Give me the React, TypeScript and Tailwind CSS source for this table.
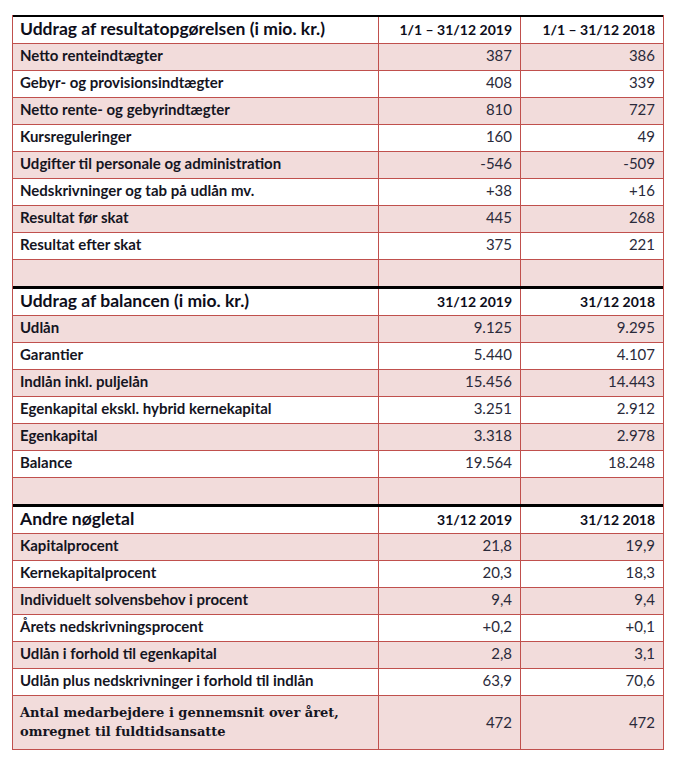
import React from 'react';

type Row = { label: string; a: string; b: string };

const sections: { title: string; colA: string; colB: string; rows: Row[]; spacer: boolean }[] = [
  {
    title: 'Uddrag af resultatopgørelsen (i mio. kr.)',
    colA: '1/1 – 31/12 2019',
    colB: '1/1 – 31/12 2018',
    spacer: true,
    rows: [
      { label: 'Netto renteindtægter', a: '387', b: '386' },
      { label: 'Gebyr- og provisionsindtægter', a: '408', b: '339' },
      { label: 'Netto rente- og gebyrindtægter', a: '810', b: '727' },
      { label: 'Kursreguleringer', a: '160', b: '49' },
      { label: 'Udgifter til personale og administration', a: '-546', b: '-509' },
      { label: 'Nedskrivninger og tab på udlån mv.', a: '+38', b: '+16' },
      { label: 'Resultat før skat', a: '445', b: '268' },
      { label: 'Resultat efter skat', a: '375', b: '221' },
    ],
  },
  {
    title: 'Uddrag af balancen (i mio. kr.)',
    colA: '31/12 2019',
    colB: '31/12 2018',
    spacer: true,
    rows: [
      { label: 'Udlån', a: '9.125', b: '9.295' },
      { label: 'Garantier', a: '5.440', b: '4.107' },
      { label: 'Indlån inkl. puljelån', a: '15.456', b: '14.443' },
      { label: 'Egenkapital ekskl. hybrid kernekapital', a: '3.251', b: '2.912' },
      { label: 'Egenkapital', a: '3.318', b: '2.978' },
      { label: 'Balance', a: '19.564', b: '18.248' },
    ],
  },
  {
    title: 'Andre nøgletal',
    colA: '31/12 2019',
    colB: '31/12 2018',
    spacer: false,
    rows: [
      { label: 'Kapitalprocent', a: '21,8', b: '19,9' },
      { label: 'Kernekapitalprocent', a: '20,3', b: '18,3' },
      { label: 'Individuelt solvensbehov i procent', a: '9,4', b: '9,4' },
      { label: 'Årets nedskrivningsprocent', a: '+0,2', b: '+0,1' },
      { label: 'Udlån i forhold til egenkapital', a: '2,8', b: '3,1' },
      { label: 'Udlån plus nedskrivninger i forhold til indlån', a: '63,9', b: '70,6' },
    ],
  },
];

const font = { fontFamily: 'Lato, "Open Sans", sans-serif' };

const App: React.FC = () => {
  return (
    <div className="w-[676px] h-[765px] bg-white pt-[15px] pl-[12px]" style={font}>
      <div className="w-[652px] border-l border-r border-[#c0504d]">
        {sections.map((s, si) => (
          <div key={si} className={`${si === 0 ? 'border-t-2' : 'border-t-[3px]'} border-black`}>
            <div className="flex h-[27px] border-b border-[#c0504d] bg-white">
              <div className="w-[365px] pl-[7px] pb-[2px] flex items-center text-[17.5px] font-bold text-[#0d0d1a]">{s.title}</div>
              <div className="w-[142px] border-l border-[#c0504d] pr-[8px] pb-[2px] flex items-center justify-end text-[14px] font-bold text-[#0d0d1a]">{s.colA}</div>
              <div className="flex-1 border-l border-[#c0504d] pr-[8px] pb-[2px] flex items-center justify-end text-[14px] font-bold text-[#0d0d1a]">{s.colB}</div>
            </div>
            {s.rows.map((r, ri) => (
              <div key={ri} className={`flex h-[27px] border-b border-[#c0504d] ${ri % 2 === 0 ? 'bg-[#f2dcdb]' : 'bg-white'}`}>
                <div className="w-[365px] pl-[7px] pb-[3px] flex items-center text-[15px] font-bold text-[#15151f]">{r.label}</div>
                <div className="w-[142px] border-l border-[#c0504d] pr-[8px] pb-[3px] flex items-center justify-end text-[15px] text-[#2a2a3a]">{r.a}</div>
                <div className="flex-1 border-l border-[#c0504d] pr-[8px] pb-[3px] flex items-center justify-end text-[15px] text-[#2a2a3a]">{r.b}</div>
              </div>
            ))}
            {s.spacer ? (
              <div className="flex h-[26px] bg-[#f2dcdb]">
                <div className="w-[365px]" />
                <div className="w-[142px] border-l border-[#c0504d]" />
                <div className="flex-1 border-l border-[#c0504d]" />
              </div>
            ) : (
              <div className="flex h-[54px] border-b border-[#c0504d] bg-[#f2dcdb]">
                <div
                  className="w-[365px] pl-[7px] pb-[2px] flex items-center text-[13px] leading-[19px] font-bold text-[#15151f]"
                  style={{ fontFamily: '"DejaVu Serif", "Liberation Serif", serif' }}
                >
                  Antal medarbejdere i gennemsnit over året,
                  <br />
                  omregnet til fuldtidsansatte
                </div>
                <div className="w-[142px] border-l border-[#c0504d] pr-[8px] flex items-center justify-end text-[15px] text-[#2a2a3a]">472</div>
                <div className="flex-1 border-l border-[#c0504d] pr-[8px] flex items-center justify-end text-[15px] text-[#2a2a3a]">472</div>
              </div>
            )}
          </div>
        ))}
      </div>
    </div>
  );
};

export default App;
